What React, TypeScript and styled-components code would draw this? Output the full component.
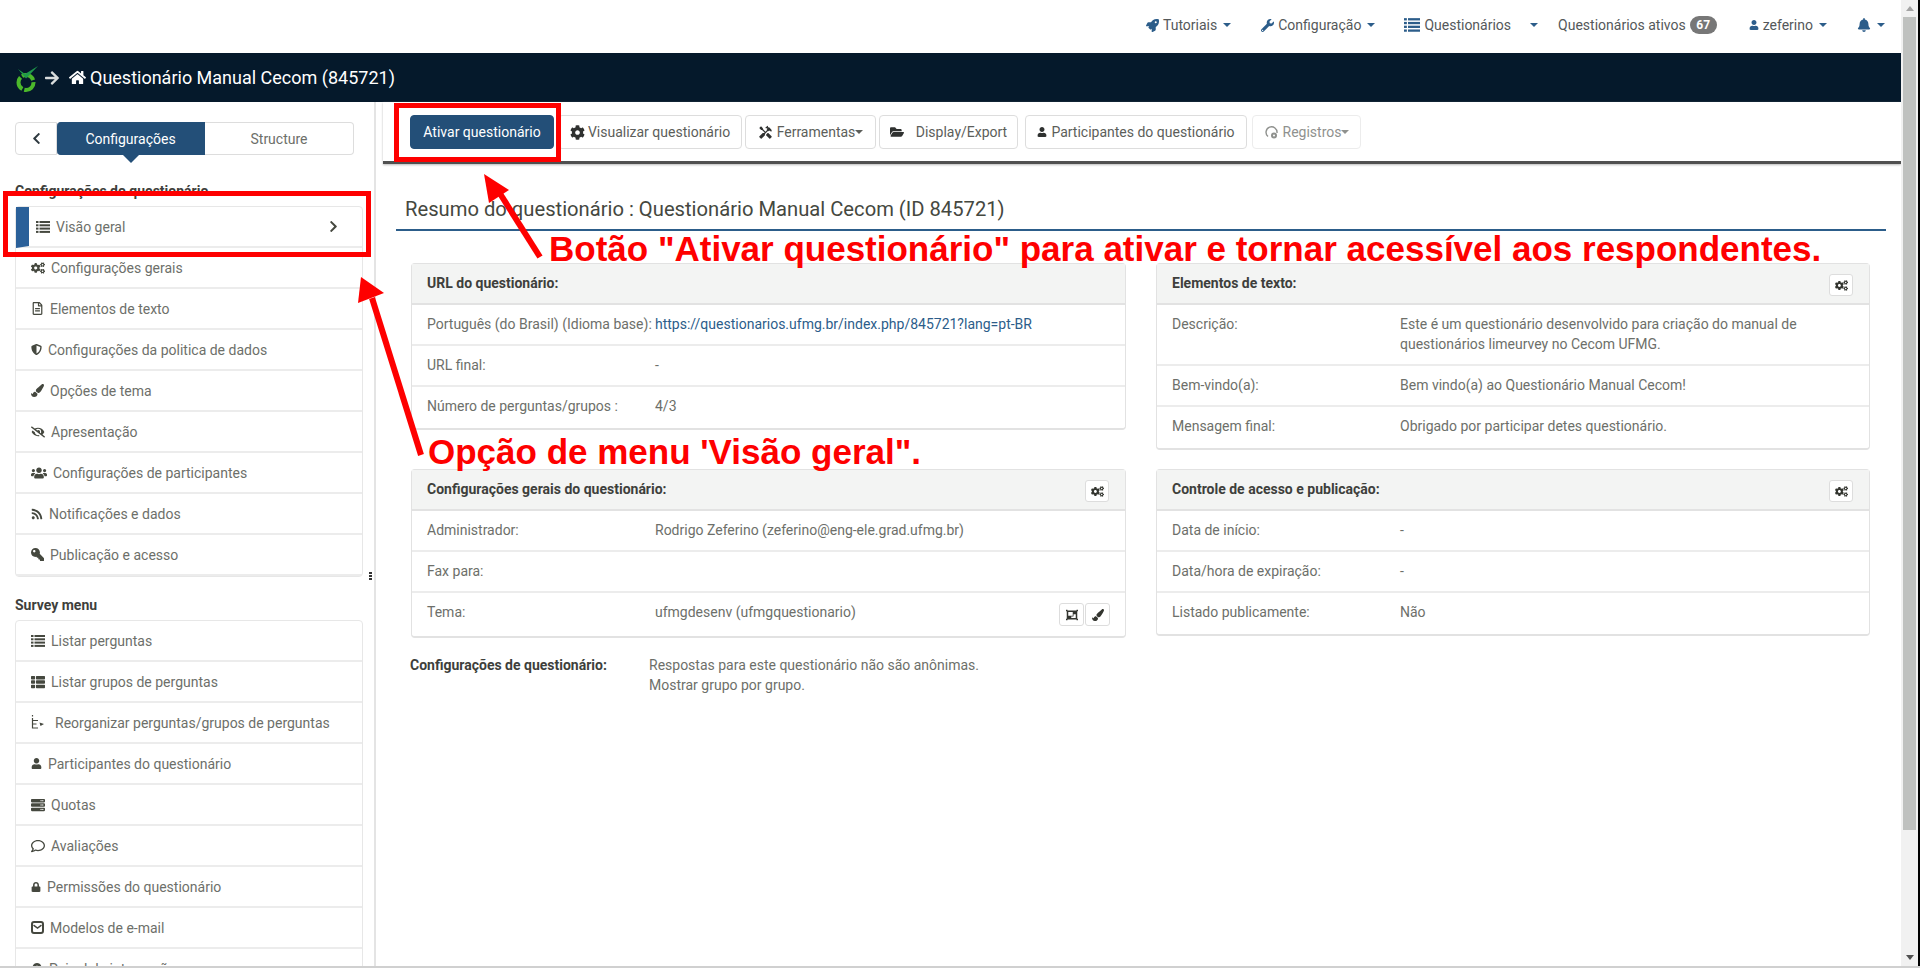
import React from 'react';
import styled, { createGlobalStyle } from 'styled-components';
import {
  FaRocket,
  FaWrench,
  FaThList,
  FaUser,
  FaBell,
  FaHome,
  FaArrowRight,
  FaChevronLeft,
  FaChevronRight,
  FaCogs,
  FaCog,
  FaFolderOpen,
  FaRegFileAlt,
  FaShieldAlt,
  FaPaintBrush,
  FaEyeSlash,
  FaUsers,
  FaRss,
  FaKey,
  FaRegComment,
  FaLock,
  FaMapMarkerAlt,
  FaServer,
  FaObjectGroup,
} from 'react-icons/fa';
import { MdHandyman } from 'react-icons/md';

const GlobalStyle = createGlobalStyle`
  html, body {
    margin: 0;
    height: 968px;
    overflow: hidden;
    background: #fff;
  }
  body {
    font-family: Roboto, "Liberation Sans", sans-serif;
    font-size: 14px;
    color: #6d6f6a;
  }
`;

const Page = styled.div`
  position: relative;
  display: flex;
  height: 968px;
  overflow: hidden;
  border-bottom: 2px solid #d0d0d0;
  box-sizing: border-box;
`;

const Main = styled.div`
  flex: 1;
  min-width: 0;
  display: flex;
  flex-direction: column;
`;

const Scrollbar = styled.div`
  width: 19px;
  flex: none;
  box-sizing: border-box;
  background: #f1f1f1;
  border-right: 2px solid #000;
  display: flex;
  flex-direction: column;
  align-items: stretch;
`;

const ScrollArrow = styled.div<{ $down?: boolean }>`
  height: 17px;
  display: flex;
  align-items: center;
  justify-content: center;
  ${(p) => p.$down && 'margin-top: auto;'}
  &::before {
    content: '';
    border-left: 4px solid transparent;
    border-right: 4px solid transparent;
    ${(p) => (p.$down ? 'border-top: 5px solid #505050;' : 'border-bottom: 5px solid #a3a3a3;')}
  }
`;

const ScrollThumb = styled.div`
  height: 813px;
  margin: 0 2px;
  background: #bfc1bf;
`;

const TopNav = styled.nav`
  height: 53px;
  flex: none;
  box-sizing: border-box;
  padding: 0 16px 3px 0;
  display: flex;
  align-items: center;
  justify-content: flex-end;
  color: #54585a;
`;

const NavItem = styled.div<{ $gap?: number }>`
  display: flex;
  align-items: center;
  gap: 4px;
  margin-left: ${(p) => p.$gap ?? 30}px;
  svg {
    color: #2c5d8a;
  }
`;

const Caret = styled.span<{ $gap?: number }>`
  display: inline-block;
  margin-left: ${(p) => p.$gap ?? 2}px;
  border-top: 4px solid #2c5d8a;
  border-left: 4px solid transparent;
  border-right: 4px solid transparent;
`;

const Badge = styled.span`
  background: #777;
  color: #fff;
  font-size: 12px;
  font-weight: 700;
  border-radius: 10px;
  width: 27px;
  height: 18px;
  display: flex;
  align-items: center;
  justify-content: center;
`;

const TitleBar = styled.header`
  height: 49px;
  flex: none;
  background: #05192b;
  display: flex;
  align-items: center;
  padding-left: 14px;
  color: #fff;
  font-size: 18px;
  svg {
    flex: none;
  }
`;

const TitleArrow = styled(FaArrowRight)`
  margin: 0 9px 0 6px;
  color: #d9dcdc;
`;

const TitleHome = styled(FaHome)`
  margin-right: 4px;
`;

const Body = styled.div`
  flex: 1;
  min-height: 0;
  display: flex;
`;

const Sidebar = styled.aside`
  width: 376px;
  flex: none;
  box-sizing: border-box;
  border-right: 2px solid #e4e4e4;
  padding: 20px 11px 0 15px;
  position: relative;
  overflow: hidden;
`;

const SideTabs = styled.div`
  display: flex;
  height: 33px;
  width: 339px;
  margin-bottom: 27px;
`;

const BackTab = styled.div`
  width: 42px;
  box-sizing: border-box;
  border: 1px solid #ddd;
  border-radius: 4px 0 0 4px;
  display: flex;
  align-items: center;
  justify-content: center;
  color: #2f3a40;
`;

const SideTab = styled.div<{ $active?: boolean }>`
  width: ${(p) => (p.$active ? 148 : 149)}px;
  box-sizing: border-box;
  display: flex;
  align-items: center;
  justify-content: center;
  position: relative;
  color: ${(p) => (p.$active ? '#fff' : '#6d6f6a')};
  background: ${(p) => (p.$active ? '#234f78' : '#fff')};
  border: 1px solid ${(p) => (p.$active ? '#234f78' : '#ddd')};
  border-left: 0;
  border-radius: ${(p) => (p.$active ? '4px 0 0 4px' : '0 4px 4px 0')};
  ${(p) =>
    p.$active &&
    `
    &::after {
      content: '';
      position: absolute;
      left: 50%;
      bottom: -9px;
      margin-left: -8px;
      border-top: 8px solid #234f78;
      border-left: 8px solid transparent;
      border-right: 8px solid transparent;
    }
  `}
`;

const SideHeading = styled.div`
  font-weight: 700;
  font-size: 14px;
  line-height: 18px;
  color: #3e3f3c;
  margin-bottom: 6px;
`;

const SideList = styled.div`
  border: 1px solid #e7e7e7;
  border-radius: 4px;
  margin-bottom: 19px;
`;

const SideRow = styled.div<{ $active?: boolean; $wide?: boolean }>`
  height: 41px;
  box-sizing: border-box;
  position: relative;
  display: flex;
  align-items: center;
  gap: ${(p) => (p.$wide ? 10 : 6)}px;
  padding-left: ${(p) => (p.$active ? 7 : 15)}px;
  border-bottom: 2px solid #ececec;
  color: #6d6f6a;
  svg {
    flex: none;
    color: #45483f;
  }
  ${(p) =>
    p.$active &&
    `
    border-left: 13px solid #2a6099;
  `}
`;

const RowChevron = styled.span`
  position: absolute;
  right: 22px;
  top: 13px;
  display: flex;
`;

const FlippedKey = styled(FaKey)`
  transform: scaleX(-1);
`;

const Grip = styled.div`
  position: absolute;
  right: 2px;
  top: 470px;
  display: flex;
  flex-direction: column;
  gap: 1px;
  span {
    width: 3px;
    height: 2px;
    background: #333;
  }
`;

const Content = styled.main`
  flex: 1;
  min-width: 0;
`;

const Toolbar = styled.div`
  height: 62px;
  margin-left: 7px;
  box-sizing: border-box;
  padding: 13px 0 0 27px;
  display: flex;
  border-bottom: 3px solid #505050;
  box-shadow: 0 1px 2px #bbb;
`;

const ToolButton = styled.div<{ $w: number; $ml?: number; $iconGap?: number; $primary?: boolean; $muted?: boolean }>`
  width: ${(p) => p.$w}px;
  height: 34px;
  margin-left: ${(p) => p.$ml ?? 0}px;
  box-sizing: border-box;
  display: flex;
  align-items: center;
  justify-content: center;
  gap: ${(p) => p.$iconGap ?? 4}px;
  border-radius: 4px;
  font-size: 14px;
  white-space: nowrap;
  border: 1px solid ${(p) => (p.$primary ? '#234f78' : p.$muted ? '#ececec' : '#ddd')};
  background: ${(p) => (p.$primary ? '#234f78' : '#fff')};
  color: ${(p) => (p.$primary ? '#fff' : p.$muted ? '#8f918e' : '#5c5e5a')};
  svg {
    color: ${(p) => (p.$muted ? '#8f918e' : '#2f3130')};
    flex: none;
  }
`;

const ButtonCaret = styled.span`
  margin-left: -4px;
  border-top: 4px solid currentColor;
  border-left: 4px solid transparent;
  border-right: 4px solid transparent;
`;

const Summary = styled.div`
  margin-left: 20px;
  margin-right: 15px;
`;

const SummaryTitle = styled.h1`
  margin: 32px 0 0;
  padding: 0 0 6px 9px;
  font-size: 20.2px;
  font-weight: 400;
  line-height: 27px;
  color: #45483f;
  border-bottom: 2px solid #2c5d8a;
`;

const CardGrid = styled.div`
  display: grid;
  grid-template-columns: 715px 714px;
  column-gap: 30px;
  margin: 32px 0 0 15px;
  align-items: start;
`;

const CardColumn = styled.div<{ $gap: number }>`
  display: flex;
  flex-direction: column;
  gap: ${(p) => p.$gap}px;
`;

const Card = styled.section`
  border: 1px solid #e2e2e2;
  border-bottom-width: 2px;
  border-radius: 4px;
  box-sizing: border-box;
`;

const CardHead = styled.div`
  height: 41px;
  box-sizing: border-box;
  background: #f3f4f3;
  border-bottom: 2px solid #e2e2e2;
  padding: 0 15px;
  display: flex;
  align-items: flex-start;
  justify-content: space-between;
  font-weight: 700;
  line-height: 39px;
  color: #3e3f3c;
`;

const GearButton = styled.div`
  width: 24px;
  height: 22px;
  margin-top: 10px;
  margin-right: 1px;
  box-sizing: border-box;
  background: #fff;
  border: 1px solid #ddd;
  border-radius: 3px;
  display: flex;
  align-items: center;
  justify-content: center;
  color: #33352f;
`;

const CardRow = styled.div<{ $last?: boolean; $tall?: boolean }>`
  display: flex;
  position: relative;
  padding: 9px 15px 10px 15px;
  line-height: 20px;
  min-height: ${(p) => (p.$tall ? 43 : 41)}px;
  box-sizing: border-box;
  border-bottom: ${(p) => (p.$last ? '0' : '2px solid #ececec')};
`;

const RowLabel = styled.div`
  width: 228px;
  flex: none;
  white-space: nowrap;
`;

const RowValue = styled.div`
  flex: 1;
  white-space: pre-line;
  a {
    color: #2c5d8a;
    text-decoration: none;
  }
`;

const ThemeButtons = styled.div`
  position: absolute;
  right: 15px;
  top: 10px;
  display: flex;
  gap: 1px;
`;

const ThemeButton = styled.div`
  width: 25px;
  height: 23px;
  box-sizing: border-box;
  border: 1px solid #ddd;
  border-radius: 3px;
  display: flex;
  align-items: center;
  justify-content: center;
  color: #33352f;
`;

const Settings = styled.div`
  display: flex;
  margin: 17px 0 0 14px;
  line-height: 20px;
`;

const SettingsLabel = styled.div`
  width: 239px;
  flex: none;
  font-weight: 700;
  color: #3e3f3c;
`;

const Overlay = styled.div`
  position: absolute;
  left: 0;
  top: 0;
  width: 1902px;
  height: 968px;
  pointer-events: none;
`;

const RedBox = styled.div<{ $x: number; $y: number; $w: number; $h: number }>`
  position: absolute;
  left: ${(p) => p.$x}px;
  top: ${(p) => p.$y}px;
  width: ${(p) => p.$w}px;
  height: ${(p) => p.$h}px;
  box-sizing: border-box;
  border: 5px solid #fe0000;
`;

const RedText = styled.div<{ $x: number; $y: number }>`
  position: absolute;
  left: ${(p) => p.$x}px;
  top: ${(p) => p.$y}px;
  font-family: "Liberation Sans", Arial, sans-serif;
  font-weight: 700;
  font-size: 35px;
  line-height: 38px;
  color: #fe0000;
  white-space: nowrap;
`;

const ArrowLayer = styled.svg`
  position: absolute;
  left: 0;
  top: 0;
`;

const ListIcon = ({ size = 14 }: { size?: number }) => (
  <svg width={size} height={size} viewBox="0 0 14 14" fill="currentColor">
    <rect x="0" y="1" width="2.5" height="2" />
    <rect x="3.5" y="1" width="10.5" height="2" />
    <rect x="0" y="4.3" width="2.5" height="2" />
    <rect x="3.5" y="4.3" width="10.5" height="2" />
    <rect x="0" y="7.6" width="2.5" height="2" />
    <rect x="3.5" y="7.6" width="10.5" height="2" />
    <rect x="0" y="10.9" width="2.5" height="2" />
    <rect x="3.5" y="10.9" width="10.5" height="2" />
  </svg>
);

const ReorderIcon = () => (
  <svg width="14" height="15" viewBox="0 0 14 15" fill="none" stroke="currentColor">
    <path d="M1.5 0v1.5M1.5 3v10.5M1.5 5.5h5.5M1.5 9h4M1.5 13h5.5" strokeWidth="1.2" />
    <path d="M8.5 7.5 L13 9 L9.5 11 Z" fill="currentColor" stroke="none" />
  </svg>
);

const MailBoxIcon = () => (
  <svg width="13" height="13" viewBox="0 0 13 13" fill="none" stroke="currentColor">
    <rect x="1" y="1" width="11" height="11" rx="2" strokeWidth="2" />
    <path d="M2.5 4.2 L6.5 7 L10.5 4.2" strokeWidth="1.5" />
  </svg>
);

const RecordsIcon = () => (
  <svg width="15" height="15" viewBox="0 0 15 15" fill="none" stroke="currentColor">
    <path d="M4 11.5 A5.5 5.5 0 1 1 13 8" strokeWidth="1.4" />
    <circle cx="10" cy="10.5" r="3" fill="currentColor" stroke="none" />
    <circle cx="10" cy="10.5" r="1" fill="#fff" stroke="none" />
  </svg>
);

const Logo = () => (
  <svg width="24" height="28" viewBox="0 0 24 28">
    <circle cx="12" cy="18.5" r="7.5" fill="none" stroke="#4cb82b" strokeWidth="4" strokeDasharray="13.5 2" />
    <path d="M4 5 L11 10 L24 2 L12 14.5 Z" fill="#1f9a4b" />
  </svg>
);

const settingsMenu = [
  { icon: <FaCogs size={14} />, label: 'Configurações gerais' },
  { icon: <FaRegFileAlt size={13} />, label: 'Elementos de texto' },
  { icon: <FaShieldAlt size={11} />, label: 'Configurações da politica de dados' },
  { icon: <FaPaintBrush size={13} />, label: 'Opções de tema' },
  { icon: <FaEyeSlash size={14} />, label: 'Apresentação' },
  { icon: <FaUsers size={16} />, label: 'Configurações de participantes' },
  { icon: <FaRss size={12} />, label: 'Notificações e dados' },
  { icon: <FlippedKey size={13} />, label: 'Publicação e acesso' },
];

const surveyMenu = [
  { icon: <ListIcon />, label: 'Listar perguntas' },
  { icon: <FaThList size={14} />, label: 'Listar grupos de perguntas' },
  { icon: <ReorderIcon />, label: 'Reorganizar perguntas/grupos de perguntas', wide: true },
  { icon: <FaUser size={11} />, label: 'Participantes do questionário' },
  { icon: <FaServer size={14} />, label: 'Quotas' },
  { icon: <FaRegComment size={14} />, label: 'Avaliações' },
  { icon: <FaLock size={10} />, label: 'Permissões do questionário' },
  { icon: <MailBoxIcon />, label: 'Modelos de e-mail' },
  { icon: <FaMapMarkerAlt size={12} />, label: 'Painel de integração' },
];

const Row = ({
  label,
  children,
  last,
}: {
  label: string;
  children?: React.ReactNode;
  last?: boolean;
}) => (
  <CardRow $last={last}>
    <RowLabel>{label}</RowLabel>
    <RowValue>{children}</RowValue>
  </CardRow>
);

const Gear = () => (
  <GearButton>
    <FaCogs size={13} />
  </GearButton>
);

export default function App() {
  return (
    <>
      <GlobalStyle />
      <Page>
        <Main>
          <TopNav>
            <NavItem>
              <FaRocket size={13} />
              Tutoriais
              <Caret />
            </NavItem>
            <NavItem>
              <FaWrench size={13} />
              Configuração
              <Caret />
            </NavItem>
            <NavItem $gap={29}>
              <ListIcon size={16} />
              Questionários
              <Caret $gap={15} />
            </NavItem>
            <NavItem $gap={20}>
              Questionários ativos
              <Badge>67</Badge>
            </NavItem>
            <NavItem $gap={32}>
              <FaUser size={10} />
              zeferino
              <Caret />
            </NavItem>
            <NavItem $gap={30}>
              <FaBell size={14} />
              <Caret />
            </NavItem>
          </TopNav>
          <TitleBar>
            <Logo />
            <TitleArrow size={16} />
            <TitleHome size={17} />
            Questionário Manual Cecom (845721)
          </TitleBar>
          <Body>
            <Sidebar>
              <SideTabs>
                <BackTab>
                  <FaChevronLeft size={13} />
                </BackTab>
                <SideTab $active>Configurações</SideTab>
                <SideTab>Structure</SideTab>
              </SideTabs>
              <SideHeading>Configurações do questionário</SideHeading>
              <SideList>
                <SideRow $active>
                  <ListIcon />
                  Visão geral
                  <RowChevron>
                    <FaChevronRight size={13} />
                  </RowChevron>
                </SideRow>
                {settingsMenu.map((item) => (
                  <SideRow key={item.label}>
                    {item.icon}
                    {item.label}
                  </SideRow>
                ))}
              </SideList>
              <SideHeading>Survey menu</SideHeading>
              <SideList>
                {surveyMenu.map((item) => (
                  <SideRow key={item.label} $wide={item.wide}>
                    {item.icon}
                    {item.label}
                  </SideRow>
                ))}
              </SideList>
              <Grip>
                <span />
                <span />
                <span />
              </Grip>
            </Sidebar>
            <Content>
              <Toolbar>
                <ToolButton $primary $w={144}>Ativar questionário</ToolButton>
                <ToolButton $w={184} $ml={4} $iconGap={3}>
                  <FaCog size={15} />
                  Visualizar questionário
                </ToolButton>
                <ToolButton $w={131} $ml={3}>
                  <MdHandyman size={15} />
                  Ferramentas
                  <ButtonCaret />
                </ToolButton>
                <ToolButton $w={139} $ml={3} $iconGap={12}>
                  <FaFolderOpen size={14} />
                  Display/Export
                </ToolButton>
                <ToolButton $w={222} $ml={7}>
                  <FaUser size={10} />
                  Participantes do questionário
                </ToolButton>
                <ToolButton $muted $w={109} $ml={5}>
                  <RecordsIcon />
                  Registros
                  <ButtonCaret />
                </ToolButton>
              </Toolbar>
              <Summary>
                <SummaryTitle>Resumo do questionário : Questionário Manual Cecom (ID 845721)</SummaryTitle>
                <CardGrid>
                  <CardColumn $gap={39}>
                    <Card>
                      <CardHead>URL do questionário:</CardHead>
                      <Row label="Português (do Brasil) (Idioma base):">
                        <a href="#url">https://questionarios.ufmg.br/index.php/845721?lang=pt-BR</a>
                      </Row>
                      <Row label="URL final:">-</Row>
                      <Row label="Número de perguntas/grupos :" last>
                        4/3
                      </Row>
                    </Card>
                    <Card>
                      <CardHead>
                        Configurações gerais do questionário:
                        <Gear />
                      </CardHead>
                      <Row label="Administrador:">Rodrigo Zeferino (zeferino@eng-ele.grad.ufmg.br)</Row>
                      <Row label="Fax para:" />
                      <CardRow $last $tall>
                        <RowLabel>Tema:</RowLabel>
                        <RowValue>ufmgdesenv (ufmgquestionario)</RowValue>
                        <ThemeButtons>
                          <ThemeButton>
                            <FaObjectGroup size={12} />
                          </ThemeButton>
                          <ThemeButton>
                            <FaPaintBrush size={12} />
                          </ThemeButton>
                        </ThemeButtons>
                      </CardRow>
                    </Card>
                  </CardColumn>
                  <CardColumn $gap={19}>
                    <Card>
                      <CardHead>
                        Elementos de texto:
                        <Gear />
                      </CardHead>
                      <Row label="Descrição:">
                        {'Este é um questionário desenvolvido para criação do manual de\nquestionários limeurvey no Cecom UFMG.'}
                      </Row>
                      <Row label="Bem-vindo(a):">Bem vindo(a) ao Questionário Manual Cecom!</Row>
                      <Row label="Mensagem final:" last>
                        Obrigado por participar detes questionário.
                      </Row>
                    </Card>
                    <Card>
                      <CardHead>
                        Controle de acesso e publicação:
                        <Gear />
                      </CardHead>
                      <Row label="Data de início:">-</Row>
                      <Row label="Data/hora de expiração:">-</Row>
                      <Row label="Listado publicamente:" last>
                        Não
                      </Row>
                    </Card>
                  </CardColumn>
                </CardGrid>
                <Settings>
                  <SettingsLabel>Configurações de questionário:</SettingsLabel>
                  <div>
                    Respostas para este questionário não são anônimas.
                    <br />
                    Mostrar grupo por grupo.
                  </div>
                </Settings>
              </Summary>
            </Content>
          </Body>
        </Main>
        <Scrollbar>
          <ScrollArrow />
          <ScrollThumb />
          <ScrollArrow $down />
        </Scrollbar>
        <Overlay>
          <RedBox $x={394} $y={103} $w={167} $h={59} />
          <RedBox $x={3} $y={191} $w={368} $h={66} />
          <RedText $x={549} $y={230}>
            Botão "Ativar questionário" para ativar e tornar acessível aos respondentes.
          </RedText>
          <RedText $x={428} $y={433}>
            Opção de menu 'Visão geral".
          </RedText>
          <ArrowLayer width="1902" height="968" viewBox="0 0 1902 968">
            <path d="M540 257 L499 192" stroke="#fe0000" strokeWidth="6" />
            <path d="M484 174 L509 190 L489 203 Z" fill="#fe0000" />
            <path d="M421 455 L372 298" stroke="#fe0000" strokeWidth="6" />
            <path d="M361 277 L384 293 L358 303 Z" fill="#fe0000" />
          </ArrowLayer>
        </Overlay>
      </Page>
    </>
  );
}
